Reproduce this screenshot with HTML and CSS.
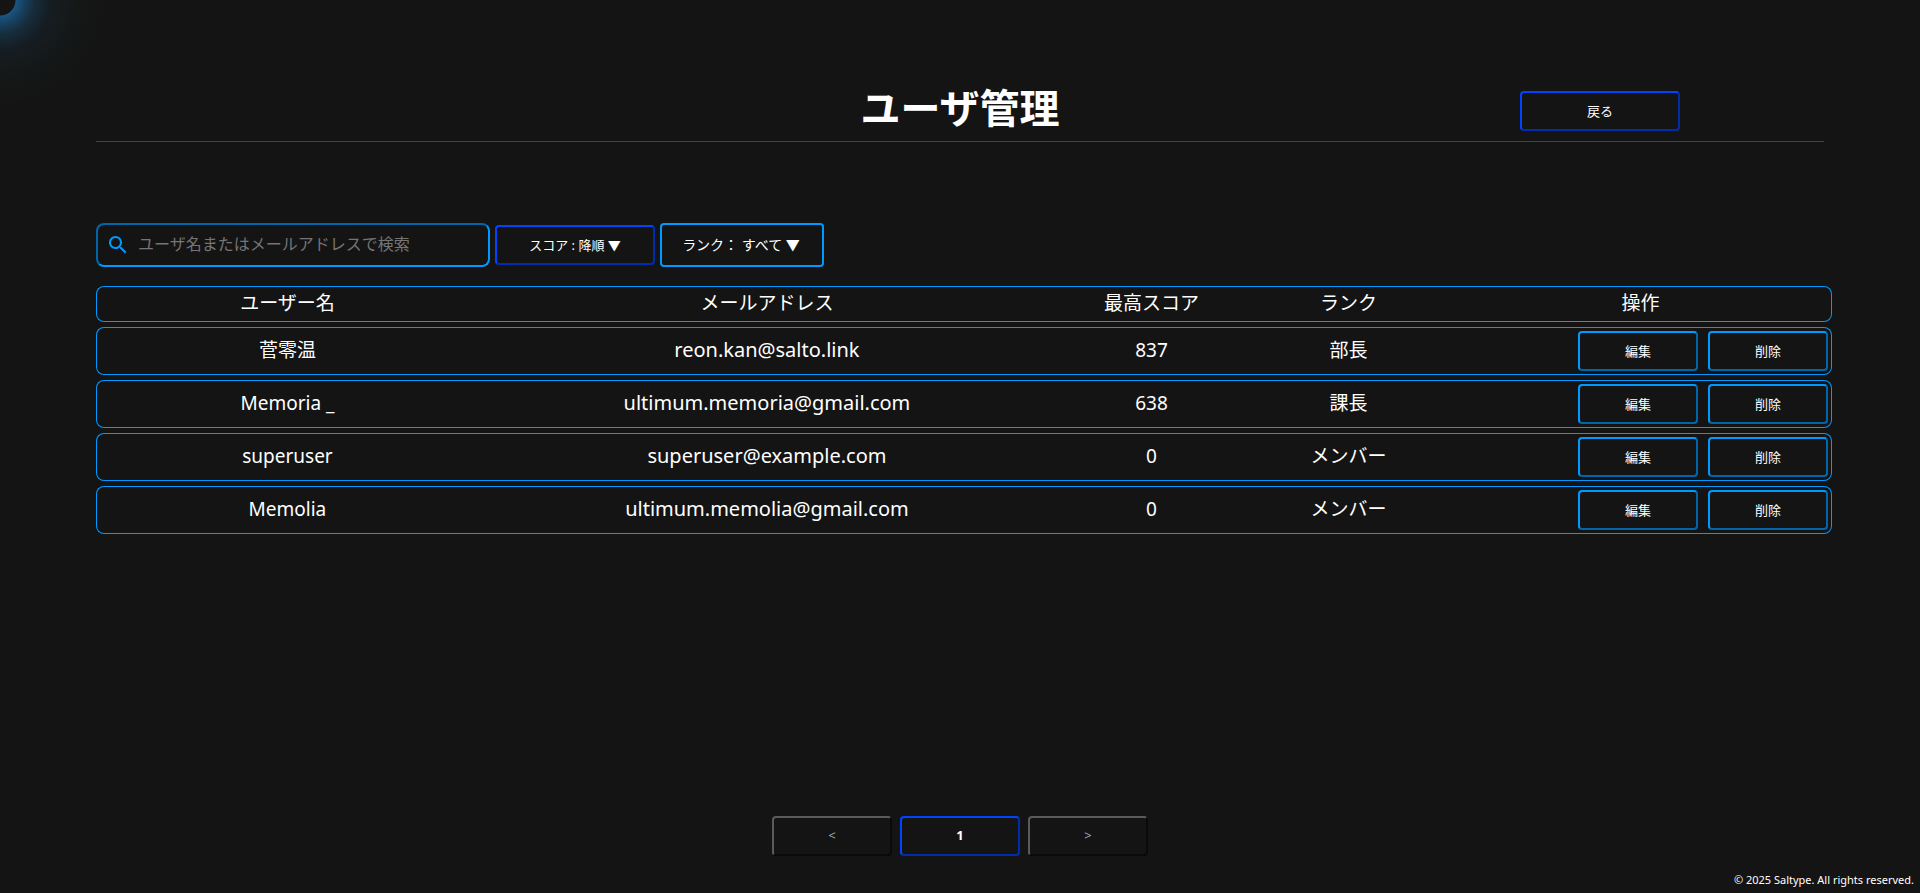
FILE: index.html
```html
<!DOCTYPE html>
<html lang="ja">
<head>
<meta charset="utf-8">
<title>ユーザ管理</title>
<link rel="stylesheet" href="styles.css">
</head>
<body>
<div class="glow" aria-hidden="true"></div>
<div class="page">
  <header class="header">
    <h1 class="title">ユーザ管理</h1>
    <button class="btn btn-primary btn-wide back" type="button">戻る</button>
  </header>
  <main class="main">
    <div class="toolbar">
      <label class="search">
        <svg class="search-icon" viewBox="0 0 24 24" aria-hidden="true"><path d="M15.5 14h-.79l-.28-.27C15.41 12.59 16 11.11 16 9.5 16 5.91 13.09 3 9.5 3S3 5.91 3 9.5 5.91 16 9.5 16c1.61 0 3.09-.59 4.23-1.57l.27.28v.79l5 4.99L20.49 19l-4.99-5zm-6 0C7.01 14 5 11.99 5 9.5S7.01 5 9.5 5 14 7.01 14 9.5 11.99 14 9.5 14z"/></svg>
        <input class="search-input" type="text" aria-label="検索" placeholder="ユーザ名またはメールアドレスで検索">
      </label>
      <button class="btn btn-primary btn-wide" type="button">スコア : 降順 ▼</button>
      <select class="rank" aria-label="ランク">
        <option>ランク： すべて ▼</option>
        <option>部長</option>
        <option>課長</option>
        <option>メンバー</option>
      </select>
    </div>
    <table class="users">
      <colgroup><col class="col-name"><col class="col-mail"><col class="col-score"><col class="col-rank"><col class="col-ops"></colgroup>
      <thead>
        <tr><th>ユーザー名</th><th>メールアドレス</th><th>最高スコア</th><th>ランク</th><th>操作</th></tr>
      </thead>
      <tbody>
        <tr><td>菅零温</td><td class="mail">reon.kan@salto.link</td><td>837</td><td>部長</td><td><div class="ops"><button class="btn btn-row" type="button">編集</button><button class="btn btn-row" type="button">削除</button></div></td></tr>
        <tr><td>Memoria _</td><td class="mail">ultimum.memoria@gmail.com</td><td>638</td><td>課長</td><td><div class="ops"><button class="btn btn-row" type="button">編集</button><button class="btn btn-row" type="button">削除</button></div></td></tr>
        <tr><td>superuser</td><td class="mail">superuser@example.com</td><td>0</td><td>メンバー</td><td><div class="ops"><button class="btn btn-row" type="button">編集</button><button class="btn btn-row" type="button">削除</button></div></td></tr>
        <tr><td>Memolia</td><td class="mail">ultimum.memolia@gmail.com</td><td>0</td><td>メンバー</td><td><div class="ops"><button class="btn btn-row" type="button">編集</button><button class="btn btn-row" type="button">削除</button></div></td></tr>
      </tbody>
    </table>
  </main>
  <nav class="pager" aria-label="ページ">
    <button class="btn" type="button" disabled>&lt;</button>
    <button class="btn btn-primary current" type="button" aria-current="page">1</button>
    <button class="btn" type="button" disabled>&gt;</button>
  </nav>
  <footer class="footer">© 2025 Saltype. All rights reserved.</footer>
</div>
</body>
</html>
```
FILE: styles.css
```css
* {
  box-sizing: border-box;
}

body {
  margin: 0;
  background: #141414;
  color: #fff;
  font-family: "Noto Sans", "Noto Sans CJK JP", sans-serif;
  font-size: 19px;
}

.page {
  display: flex;
  flex-direction: column;
  min-height: 100vh;
}

/* Light around the pointer, resting in the corner */
.glow {
  position: absolute;
  top: 0;
  left: 0;
  width: 110px;
  height: 110px;
  pointer-events: none;
  background: radial-gradient(circle at 0 0, #141414 15px, #195582 16px, #173f5c 25px, #162c3b 35px, #151d22 50px, #151818 75px, #141414 108px);
}

.header {
  display: grid;
  grid-template-columns: 1fr auto 1fr;
  align-items: end;
  margin: 82px 5% 0;
  padding-bottom: 7px;
  border-bottom: 1px solid #0a3fe0;
}

.title {
  grid-column: 2;
  margin: 0;
  font-size: 40px;
  line-height: 52px;
  font-weight: 700;
}

.back {
  justify-self: end;
  margin: 0 144px 3px 0;
}

.btn {
  width: 120px;
  height: 40px;
  padding: 0 0 2px;
  border: 2px outset #0099ff;
  border-radius: 4px;
  background: transparent;
  color: #fff;
  font-family: inherit;
  font-size: 13px;
}

.btn-primary {
  border-color: #0044ff;
}

.btn-wide {
  width: 160px;
}

.btn:disabled {
  border-style: solid;
  border-color: #5a5a5a #0a0a0a #0a0a0a #5a5a5a;
  color: #aaa;
}

.current {
  font-weight: 700;
}

.main {
  margin: 81px 5% 0;
}

.toolbar {
  display: flex;
  align-items: center;
  gap: 5px;
}

.search {
  display: flex;
  align-items: center;
  gap: 8px;
  width: 394px;
  height: 44px;
  padding: 0 8px;
  border: 2px inset #0099ff;
  border-radius: 8px;
}

.search-icon {
  flex: none;
  width: 24px;
  height: 24px;
  fill: #0099ff;
}

.search-input {
  flex: 1;
  min-width: 0;
  padding: 0 0 2px;
  border: 0;
  outline: 0;
  background: transparent;
  color: #fff;
  font-family: inherit;
  font-size: 16px;
}

.search-input::placeholder {
  color: #757575;
}

.rank {
  width: 164px;
  height: 44px;
  padding: 0 2px 2px 0;
  appearance: none;
  border: 2px solid #0099ff;
  border-radius: 4px;
  background: #141414;
  color: #fff;
  font-family: inherit;
  font-size: 14px;
  text-align: center;
  text-align-last: center;
}

.users {
  width: calc(100% + 8px);
  margin-top: 14px;
  table-layout: fixed;
  border-collapse: separate;
  border-spacing: 0 5px;
  text-align: center;
}

.col-name,
.col-ops {
  width: 22%;
}

.col-mail {
  width: 33.3%;
}

.col-score {
  width: 11%;
}

.col-rank {
  width: 11.7%;
}

.users th,
.users td {
  padding: 2px 3px 4px;
  border: 0 solid #0099ff;
  border-width: 1px 0;
  line-height: 28px;
  font-weight: 400;
}

.users th:first-child,
.users td:first-child {
  border-left-width: 1px;
  border-radius: 8px 0 0 8px;
}

.users th:last-child,
.users td:last-child {
  border-right-width: 1px;
  border-radius: 0 8px 8px 0;
}

.users td:last-child {
  padding: 3px;
}

.users .mail {
  font-size: 20px;
}

.ops {
  display: flex;
  justify-content: flex-end;
  gap: 10px;
}

.pager {
  display: flex;
  justify-content: center;
  gap: 8px;
  margin-top: auto;
}

.footer {
  padding: 16px 6px 5px;
  text-align: right;
  font-size: 11px;
  line-height: 16px;
  color: #fff;
}
```
